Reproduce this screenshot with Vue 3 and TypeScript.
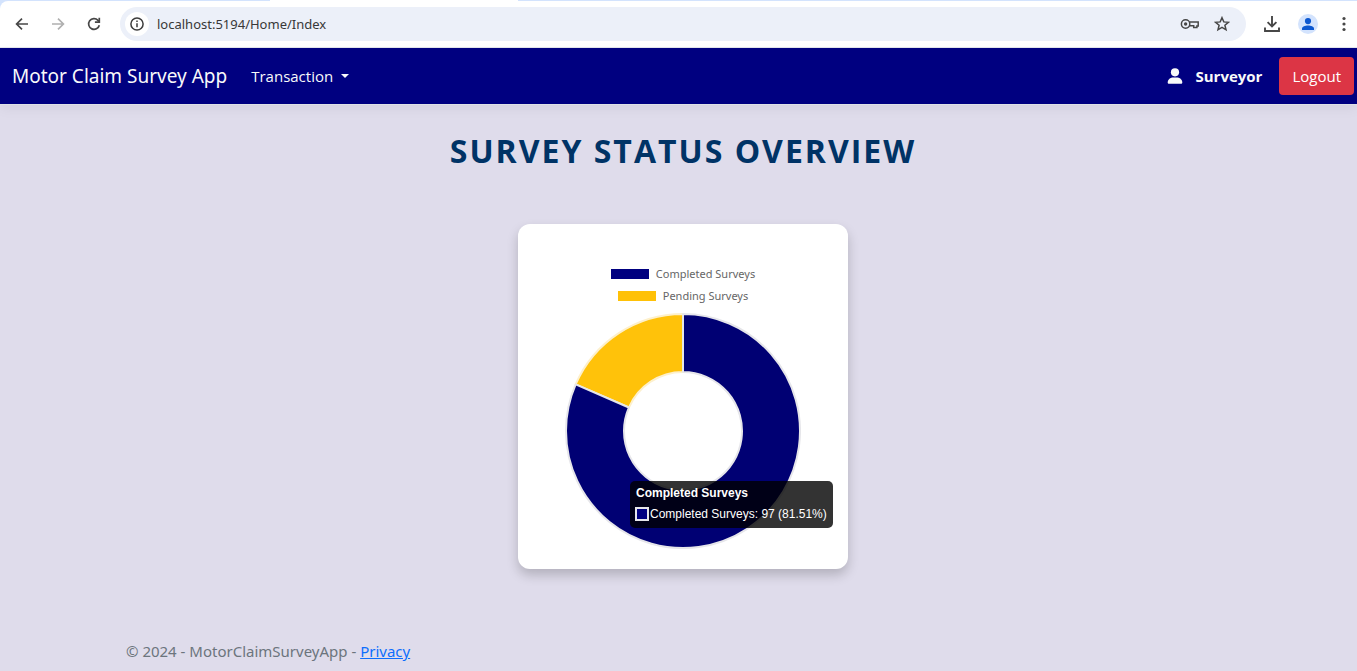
<script setup lang="ts">
import { computed, ref } from 'vue'

interface Slice {
  label: string
  value: number
  color: string
  fill: string
  stroke: string
}

const url = ref('localhost:5194/Home/Index')

const slices: Slice[] = [
  { label: 'Completed Surveys', value: 97, color: '#000080', fill: '#000073', stroke: '#e6e6ea' },
  { label: 'Pending Surveys', value: 22, color: '#ffc107', fill: '#ffc20a', stroke: '#fdf0cc' },
]

const total = slices.reduce((sum, s) => sum + s.value, 0)
const center = 118
const outer = 117
const inner = 59

function point(radius: number, turn: number): string {
  const a = turn * Math.PI * 2
  return `${(center + radius * Math.sin(a)).toFixed(2)} ${(center - radius * Math.cos(a)).toFixed(2)}`
}

const arcs = computed(() => {
  let start = 0
  const list = slices.map((s) => {
    const end = start + s.value / total
    const large = end - start > 0.5 ? 1 : 0
    const d =
      `M${point(outer, start)}A${outer} ${outer} 0 ${large} 1 ${point(outer, end)}` +
      `L${point(inner, end)}A${inner} ${inner} 0 ${large} 0 ${point(inner, start)}Z`
    start = end
    return { ...s, d }
  })
  return list.reverse()
})

const active = slices[0]
const percent = ((active.value / total) * 100).toFixed(2)
</script>

<template>
  <div class="window">
    <div class="chrome">
      <div class="tabs"><span class="tab-active"></span></div>
      <div class="toolbar">
        <button class="tool" type="button" aria-label="Back">
          <svg width="16" height="16" viewBox="0 0 16 16" fill="none" stroke="#474747" stroke-width="1.7"><path d="M14 8H3M8 2.6 2.6 8 8 13.4" /></svg>
        </button>
        <button class="tool" type="button" aria-label="Forward" disabled>
          <svg width="16" height="16" viewBox="0 0 16 16" fill="none" stroke="#b0b0b0" stroke-width="1.7"><path d="M2 8h11M8 2.6 13.4 8 8 13.4" /></svg>
        </button>
        <button class="tool" type="button" aria-label="Reload">
          <svg width="16" height="16" viewBox="0 0 16 16" fill="none" stroke="#474747" stroke-width="1.7"><path d="M13.3 9.2A5.4 5.4 0 1 1 12 4.3L13.2 5.6" /><path d="M13.3 1.8v4.4H8.9" /></svg>
        </button>
        <form class="address" @submit.prevent>
          <button class="site-info" type="button" aria-label="View site information">
            <svg width="14" height="14" viewBox="0 0 14 14" fill="none" stroke="#3c3c3c" stroke-width="1.5"><circle cx="7" cy="7" r="6.1" /><path d="M7 6.2v4M7 3.6v1.5" /></svg>
          </button>
          <input v-model="url" class="url" type="text" aria-label="Address" spellcheck="false" />
          <button class="inline-tool" type="button" aria-label="Passwords">
            <svg width="20" height="14" viewBox="0 0 20 14" fill="none" stroke="#474747" stroke-width="1.5"><path d="M9.4 5.1H18.2V9.1H16.9V10.6H13.7V8.7H9.5" /><circle cx="5.6" cy="7" r="4.2" /><circle cx="5.6" cy="7" r="1.7" fill="#474747" stroke="none" /></svg>
          </button>
          <button class="inline-tool" type="button" aria-label="Bookmark this page">
            <svg width="16" height="16" viewBox="0 0 16 16" fill="none" stroke="#474747" stroke-width="1.5"><path d="M8 1.7 9.8 5.9l4.600.4-3.500 3 1.100 4.500L8 11.400l-4 2.400 1.100-4.500-3.500-3L6.200 5.900Z" /></svg>
          </button>
        </form>
        <button class="tool" type="button" aria-label="Downloads">
          <svg width="18" height="18" viewBox="0 0 18 18" fill="none" stroke="#474747" stroke-width="1.9"><path d="M9 1v10.200M4.600 7.100 9 11.500l4.400-4.400M2 12.500V16h14v-3.500" /></svg>
        </button>
        <button class="tool" type="button" aria-label="Profile">
          <svg width="20" height="20" viewBox="0 0 20 20"><circle cx="10" cy="10" r="10" fill="#d3e3fd" /><circle cx="10" cy="7.100" r="3.100" fill="#0b57d0" /><path d="M4 16v-1.700C4 12.400 7.200 11.400 10 11.400s6 1 6 2.900V16Z" fill="#0b57d0" /></svg>
        </button>
        <button class="tool menu" type="button" aria-label="Menu">
          <svg width="4" height="16" viewBox="0 0 4 16" fill="#474747"><circle cx="2" cy="2.500" r="1.600" /><circle cx="2" cy="8" r="1.600" /><circle cx="2" cy="13.500" r="1.600" /></svg>
        </button>
      </div>
    </div>

    <header class="navbar">
      <a class="brand" href="#">Motor Claim Survey App</a>
      <button class="dropdown" type="button" aria-haspopup="true">Transaction<span class="caret"></span></button>
      <div class="account">
        <svg width="16" height="16" viewBox="0 0 16 16" fill="#f8f9fa"><circle cx="8" cy="4.300" r="4.100" /><path d="M.7 14.500C.7 11.500 3.100 9.400 6 9.400h4c2.900 0 5.300 2.100 5.300 5.100 0 .8-.5 1.300-1.200 1.300H1.900C1.200 15.800.7 15.300.7 14.500Z" /></svg>
        <strong class="user">Surveyor</strong>
        <button class="logout" type="button">Logout</button>
      </div>
    </header>

    <main class="main">
      <h1 class="title">Survey Status Overview</h1>
      <section class="card" aria-label="Survey status chart">
        <ul class="legend">
          <li v-for="s in slices" :key="s.label" class="legend-item">
            <span class="swatch" :style="{ background: s.color }"></span>{{ s.label }}
          </li>
        </ul>
        <div class="chart">
          <svg class="donut" viewBox="0 0 236 236" role="img" aria-label="Completed and pending surveys">
            <path v-for="a in arcs" :key="a.label" :d="a.d" :fill="a.fill" :stroke="a.stroke" stroke-width="2" stroke-linejoin="round" />
          </svg>
          <div class="tooltip">
            <div class="tip-title">{{ active.label }}</div>
            <div class="tip-row"><span class="tip-swatch"></span>{{ active.label }}: {{ active.value }} ({{ percent }}%)</div>
          </div>
        </div>
      </section>
    </main>

    <footer class="footer">
      <div class="container">© 2024 - MotorClaimSurveyApp - <a class="privacy" href="#">Privacy</a></div>
    </footer>
  </div>
</template>

<style>
body {
  margin: 0;
  background: #dfdceb;
}
</style>

<style scoped>
.window {
  display: flex;
  flex-direction: column;
  min-height: 100vh;
  overflow: hidden;
  box-sizing: border-box;
  font-family: "Open Sans", "Noto Sans", sans-serif;
  font-size: 15px;
  line-height: 24px;
  color: #212529;
}
button {
  font: inherit;
  border: 0;
  padding: 0;
  background: none;
  cursor: pointer;
}
.chrome {
  background: #d3e3fd;
}
.tabs {
  display: flex;
  height: 1px;
}
.tab-active {
  width: 248px;
  margin-left: 270px;
  background: #fff;
}
.toolbar {
  display: flex;
  align-items: center;
  height: 46px;
  padding: 0 11px 0 4px;
  background: #fff;
  border-bottom: 1px solid #e4e7ee;
  border-top-left-radius: 8px;
}
.tool {
  display: flex;
  align-items: center;
  justify-content: center;
  width: 36px;
  height: 34px;
}
.address {
  display: flex;
  align-items: center;
  flex: 1;
  height: 34px;
  margin: 0 8px;
  padding: 0 8px 0 5px;
  border-radius: 17px;
  background: #ecf0f9;
}
.site-info {
  display: flex;
  align-items: center;
  justify-content: center;
  width: 24px;
  height: 24px;
  border-radius: 12px;
  background: #fff;
}
.url {
  flex: 1;
  min-width: 0;
  height: 24px;
  padding: 0 8px;
  border: 0;
  outline: 0;
  background: none;
  color: #383838;
  font-family: "Noto Sans", sans-serif;
  font-size: 13px;
}
.inline-tool {
  display: flex;
  align-items: center;
  justify-content: center;
  width: 32px;
  height: 32px;
}
.menu {
  width: 4px;
  margin-left: 16px;
}
.navbar {
  display: flex;
  align-items: center;
  min-height: 56px;
  padding: 0 3px 0 12px;
  background: #000080;
  border-bottom: 1px solid #dee2e6;
  box-shadow: 0 4px 12px rgba(0, 0, 0, 0.05);
  color: #f8f9fa;
}
.brand {
  margin-right: 24px;
  color: #f8f9fa;
  font-family: "Noto Sans", sans-serif;
  font-size: 19px;
  text-decoration: none;
}
.dropdown {
  display: flex;
  align-items: center;
  gap: 8px;
  color: #f8f9fa;
}
.caret {
  border: 4px solid transparent;
  border-top-color: #f8f9fa;
  border-bottom: 0;
}
.account {
  display: flex;
  align-items: center;
  margin-left: auto;
}
.user {
  margin: 0 17px 0 12px;
}
.logout {
  height: 38px;
  padding: 0 13px;
  border-radius: 4px;
  background: #dc3545;
  color: #fff;
}
.main {
  display: flex;
  flex-direction: column;
  align-items: center;
  padding-left: 9px;
}
.title {
  margin: 22px 0 49px;
  color: #003366;
  font-size: 32px;
  font-weight: 700;
  line-height: 48px;
  letter-spacing: 2px;
  text-transform: uppercase;
}
.card {
  display: flex;
  flex-direction: column;
  align-items: center;
  width: 330px;
  box-sizing: border-box;
  padding: 39px 20px 20px;
  border-radius: 12px;
  background: #fff;
  box-shadow: 0 6px 12px rgba(0, 0, 0, 0.2);
}
.legend {
  display: flex;
  flex-direction: column;
  align-items: center;
  margin: 0 0 6px;
  padding: 0;
  list-style: none;
  color: #666;
  font-family: "Noto Sans", sans-serif;
  font-size: 11px;
  line-height: 22px;
}
.legend-item {
  display: flex;
  align-items: center;
}
.swatch {
  width: 38px;
  height: 10px;
  margin-right: 7px;
}
.chart {
  position: relative;
  width: 236px;
}
.donut {
  display: block;
  width: 100%;
}
.tooltip {
  position: absolute;
  top: 168px;
  left: 65px;
  padding: 4px 6px 6px 5px;
  border-radius: 5px;
  background: rgba(0, 0, 0, 0.8);
  color: #fff;
  font-family: "Liberation Sans", Arial, sans-serif;
  font-size: 12px;
  line-height: 16px;
  white-space: nowrap;
}
.tip-title {
  margin-bottom: 5px;
  padding-left: 1px;
  font-weight: 700;
}
.tip-row {
  display: flex;
  align-items: center;
}
.tip-swatch {
  width: 10px;
  height: 10px;
  margin-right: 1px;
  border: 2px solid #e6e6ea;
  background: #000080;
}
.footer {
  margin-top: auto;
  padding-bottom: 8px;
  color: #6c757d;
  font-family: "Noto Sans", sans-serif;
}
.container {
  max-width: 1115px;
  margin: 0 auto;
  padding: 0 7px 0 17px;
}
.privacy {
  color: #0d6efd;
}
</style>
